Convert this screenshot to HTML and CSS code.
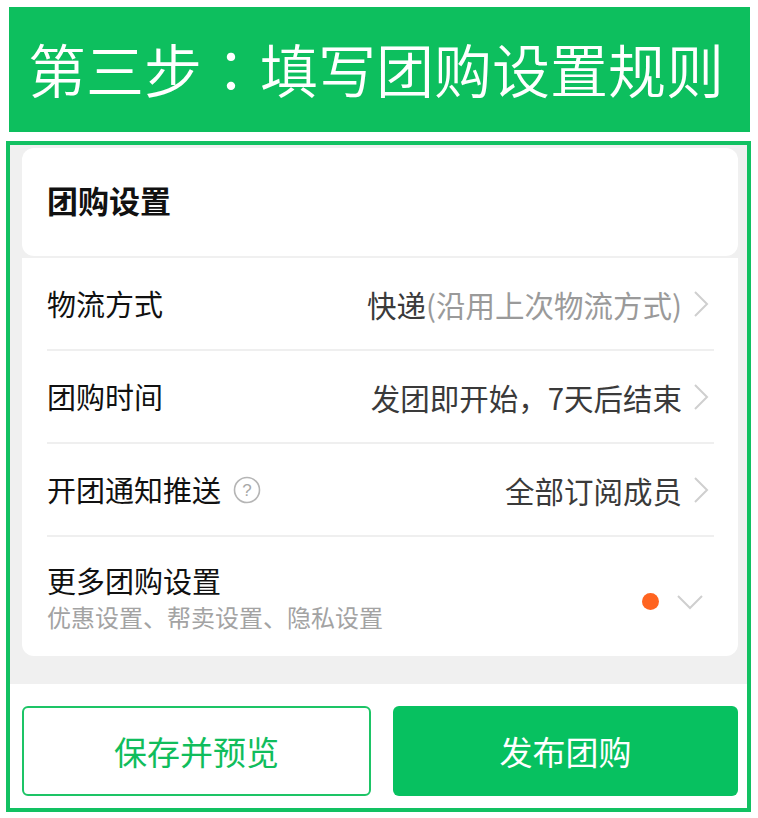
FILE: index.html
```html
<!DOCTYPE html>
<html lang="zh-CN">
  <head>
    <meta charset="UTF-8" />
    <meta name="viewport" content="width=device-width, initial-scale=1.0" />
    <title>第三步：填写团购设置规则</title>
    <link rel="stylesheet" href="styles.css">
  </head>
  <body>
    <div class="banner">第三步<span class="colon">：</span>填写团购设置规则</div>

    <div class="panel">
      <div class="settings">
        <div class="card-head">团购设置</div>

        <div class="card-body">
          <div class="row">
            <span class="label">物流方式</span>
            <span class="value">快递<span class="muted">(沿用上次物流方式)</span></span>
            <svg class="arrow" width="20" height="28" viewBox="0 0 20 28">
              <polyline points="2,2 14,14 2,26" fill="none" stroke="#cfcfcf" stroke-width="2" />
            </svg>
          </div>
          <div class="row">
            <span class="label">团购时间</span>
            <span class="value">发团即开始，7天后结束</span>
            <svg class="arrow" width="20" height="28" viewBox="0 0 20 28">
              <polyline points="2,2 14,14 2,26" fill="none" stroke="#cfcfcf" stroke-width="2" />
            </svg>
          </div>
          <div class="row">
            <span class="label">开团通知推送</span>
            <svg class="help" width="28" height="28" viewBox="0 0 28 28">
              <circle cx="14" cy="14" r="12.5" fill="none" stroke="#b5b5b5" stroke-width="1.6" />
              <text x="14" y="20" text-anchor="middle" font-size="17" fill="#a8a8a8" font-family="Liberation Sans, sans-serif">?</text>
            </svg>
            <span class="value">全部订阅成员</span>
            <svg class="arrow" width="20" height="28" viewBox="0 0 20 28">
              <polyline points="2,2 14,14 2,26" fill="none" stroke="#cfcfcf" stroke-width="2" />
            </svg>
          </div>
          <div class="row row-more">
            <div class="more-text">
              <div class="label">更多团购设置</div>
              <div class="sub">优惠设置、帮卖设置、隐私设置</div>
            </div>
            <span class="dot"></span>
            <svg class="arrow-down" width="28" height="16" viewBox="0 0 28 16">
              <polyline points="2,2 14,14 26,2" fill="none" stroke="#cfcfcf" stroke-width="2" />
            </svg>
          </div>
        </div>
      </div>

      <div class="footer">
        <button type="button" class="btn btn-ghost">保存并预览</button>
        <button type="button" class="btn btn-main">发布团购</button>
      </div>
    </div>
  </body>
</html>
```

FILE: styles.css
```css
body {
  margin: 0;
  background-color: #fff;
  font-family: "Noto Sans CJK SC", "Noto Sans", sans-serif;
}
.banner {
  margin: 7px 8px 0 9px;
  height: 125px;
  box-sizing: border-box;
  padding: 0 0 4px 19px;
  display: flex;
  align-items: center;
  background-color: #0dbf5e;
  color: #fff;
  font-size: 58px;
  font-weight: 350;
}
.colon {
  font-family: "Noto Sans CJK TC", "Noto Sans CJK SC", sans-serif;
}
.panel {
  margin: 9px 0 0 6px;
  width: 745px;
  box-sizing: border-box;
  border: 4px solid #12c162;
}
.settings {
  background-color: #f0f0f0;
  padding: 3px 9px 28px 12px;
}
.card-head {
  height: 108px;
  box-sizing: border-box;
  padding: 0 0 6px 25px;
  display: flex;
  align-items: center;
  background-color: #fff;
  border-radius: 12px;
  font-size: 31px;
  font-weight: bold;
  color: #111;
}
.card-body {
  margin-top: 2px;
  padding: 0 24px 0 25px;
  background-color: #fff;
  border-radius: 0 0 12px 12px;
}
.row {
  height: 91px;
  display: flex;
  align-items: center;
  border-bottom: 2px solid #efefef;
}
.row-more {
  height: 119px;
  border-bottom: none;
  padding-top: 2px;
  box-sizing: border-box;
}
.label {
  font-size: 29px;
  color: #111;
  line-height: 1.2;
}
.value {
  margin-left: auto;
  font-size: 29.5px;
  color: #3a3a3a;
}
.muted {
  color: #9a9a9a;
}
.arrow {
  margin-left: 11px;
  margin-right: 1px;
}
.help {
  margin-left: 12px;
}
.more-text {
  display: flex;
  flex-direction: column;
}
.sub {
  margin-top: 4px;
  font-size: 24px;
  color: #a3a3a3;
  line-height: 1.3;
}
.dot {
  margin-left: auto;
  width: 17px;
  height: 17px;
  border-radius: 50%;
  background-color: #ff6420;
  margin-top: 8px;
}
.arrow-down {
  margin-left: 17px;
  margin-right: 10px;
  margin-top: 8px;
}
.footer {
  display: flex;
  gap: 22px;
  padding: 22px 9px 12px 12px;
  background-color: #fff;
}
.btn {
  flex: 1;
  height: 90px;
  border-radius: 6px;
  font-family: "Noto Sans CJK SC", sans-serif;
  font-size: 33px;
  cursor: pointer;
}
.btn-ghost {
  background-color: #fff;
  border: 2px solid #1dc466;
  color: #10bd5c;
}
.btn-main {
  background-color: #07c160;
  border: none;
  color: #fff;
}
```
